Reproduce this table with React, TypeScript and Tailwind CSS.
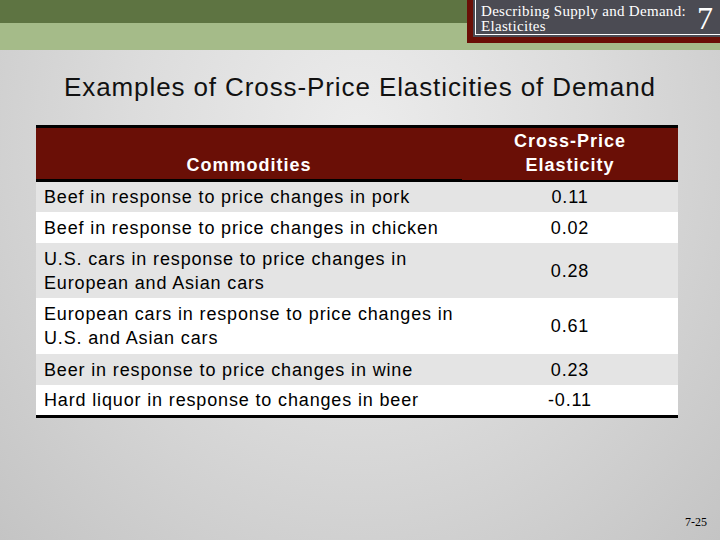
const rows = [
  { item: ["Beef in response to price changes in pork"], value: "0.11", h: "h-[30px]", bg: "bg-[#e4e4e4]" },
  { item: ["Beef in response to price changes in chicken"], value: "0.02", h: "h-[31px]", bg: "bg-white" },
  { item: ["U.S. cars in response to price changes in", "European and Asian cars"], value: "0.28", h: "h-[55px]", bg: "bg-[#e4e4e4]" },
  { item: ["European cars in response to price changes in", "U.S. and Asian cars"], value: "0.61", h: "h-[56px]", bg: "bg-white" },
  { item: ["Beer in response to price changes in wine"], value: "0.23", h: "h-[31px]", bg: "bg-[#e4e4e4]" },
  { item: ["Hard liquor in response to changes in beer"], value: "-0.11", h: "h-[30px]", bg: "bg-white" },
]

export default function App() {
  return (
    <div className="flex h-[540px] w-[720px] flex-col overflow-hidden bg-[radial-gradient(ellipse_at_50%_25%,#ececec_0%,#dcdcdc_45%,#c4c4c4_100%)] font-['Liberation_Sans',Arial,sans-serif] text-black">
      {/* top bar */}
      <header className="flex h-[50px]">
        <div className="flex flex-1 flex-col">
          <div className="h-[23px] bg-[#5e7442]" />
          <div className="flex-1 bg-[#a5bb89]" />
        </div>
        <div className="flex w-[253px] flex-col">
          <div className="h-[43px] bg-[#6a0f06] pb-[6px] pl-[6px]">
            <div className="h-full border-b-2 border-l-2 border-[#4b4b53] bg-[#4b4b53]">
              <div className="flex h-full items-start border-b border-l border-white pl-[5px] font-['Liberation_Serif',serif] text-white">
                <div className="flex-1 pt-[4px] text-[15px] leading-[15px] tracking-[0.3px]">
                  <p>Describing Supply and Demand:</p>
                  <p>Elasticites</p>
                </div>
                <span className="pr-[7px] pt-[2px] text-[32px] leading-[32px]">7</span>
              </div>
            </div>
          </div>
          <div className="flex-1 bg-[#a5bb89]" />
        </div>
      </header>

      <h1 className="pt-[22px] text-center text-[26px] leading-[30px] tracking-[0.9px] text-[#111]">
        Examples of Cross-Price Elasticities of Demand
      </h1>

      {/* table */}
      <div className="ml-[36px] mt-[23px] w-[642px] border-b-[3px] border-t-[3px] border-black">
        <div className="flex bg-[#6a0f06] text-[18px] font-bold leading-[24px] tracking-[1px] text-white">
          <div className="flex h-[54px] w-[426px] items-end justify-center border-b-[3px] border-black pb-[2px]">
            Commodities
          </div>
          <div className="flex h-[54px] flex-1 flex-col items-center border-b-2 border-black pt-[1px]">
            <span>Cross-Price</span>
            <span>Elasticity</span>
          </div>
        </div>
        {rows.map((r) => (
          <div key={r.value + r.item[0]} className={`flex items-center text-[18px] leading-[24px] tracking-[0.85px] ${r.h} ${r.bg}`}>
            <div className="w-[426px] whitespace-nowrap pl-[8px]">
              {r.item.map((line) => (
                <p key={line}>{line}</p>
              ))}
            </div>
            <div className="flex-1 text-center">{r.value}</div>
          </div>
        ))}
      </div>

      <div className="mt-auto flex justify-end pb-[11px] pr-[13px] font-['Liberation_Serif',serif] text-[12px] leading-[14px]">
        7-25
      </div>
    </div>
  )
}
